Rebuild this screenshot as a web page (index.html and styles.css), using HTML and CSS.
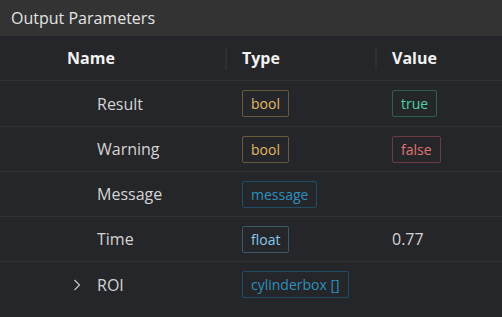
FILE: index.html
```html
<!DOCTYPE html>
<html>
<head>
<meta name="viewport" content="width=device-width, initial-scale=1">
<link rel="stylesheet" href="styles.css">
</head>
<body>

<div class="panel">
  <div class="panel-title">Output Parameters</div>

  <div class="params">
    <div class="row head">
      <div class="cell name">Name</div>
      <div class="cell type">Type</div>
      <div class="cell value">Value</div>
    </div>

    <div class="row first">
      <div class="cell name"><span class="leaf">Result</span></div>
      <div class="cell type"><span class="tag t-bool">bool</span></div>
      <div class="cell value"><span class="tag v-true">true</span></div>
    </div>

    <div class="row">
      <div class="cell name"><span class="leaf">Warning</span></div>
      <div class="cell type"><span class="tag t-bool">bool</span></div>
      <div class="cell value"><span class="tag v-false">false</span></div>
    </div>

    <div class="row">
      <div class="cell name"><span class="leaf">Message</span></div>
      <div class="cell type"><span class="tag t-msg">message</span></div>
      <div class="cell value"></div>
    </div>

    <div class="row">
      <div class="cell name"><span class="leaf">Time</span></div>
      <div class="cell type"><span class="tag t-float">float</span></div>
      <div class="cell value">0.77</div>
    </div>

    <div class="row">
      <div class="cell name">
        <svg class="chevron" width="8" height="12" viewBox="0 0 8 12"><path d="M1.5 1 L6.5 6 L1.5 11" fill="none" stroke="#c8c8c8" stroke-width="1.2"/></svg>
        <span class="leaf">ROI</span>
      </div>
      <div class="cell type"><span class="tag t-msg">cylinderbox []</span></div>
      <div class="cell value"></div>
    </div>
  </div>
</div>

</body>
</html>
```

FILE: styles.css
```css
body {
    margin: 0;
    background-color: #252629;
    font-family: "Open Sans", "Noto Sans", sans-serif;
    color: #d4d4d4;
}

.panel {
    width: 502px;
    height: 317px;
    overflow: hidden;
    background-color: #252629;
}

/* title bar */
.panel-title {
    height: 36px;
    line-height: 36px;
    padding-left: 11px;
    background-color: #333333;
    color: #e4e4e4;
    font-size: 16px;
}

.row {
    display: grid;
    grid-template-columns: 226px 150px 1fr;
    height: 45px;
    border-bottom: 1px solid #303135;
    box-sizing: border-box;
}

.row.first {
    height: 46px;
}

.row:last-child {
    border-bottom: none;
}

.cell {
    display: flex;
    align-items: center;
    padding-left: 16px;
    font-size: 16px;
}

.cell.name {
    padding-left: 97px;
}

/* header row */
.row.head {
    height: 45px;
}

.row.head .cell {
    font-weight: bold;
    color: #f2f2f2;
    position: relative;
}

.row.head .cell.name {
    padding-left: 67px;
}

.row.head .type::before,
.row.head .value::before {
    content: "";
    position: absolute;
    left: -1px;
    top: 12px;
    width: 2px;
    height: 22px;
    background-color: #2f3034;
}

.chevron {
    margin-left: -24px;
    margin-right: 16px;
}

.tag {
    display: inline-block;
    padding: 3px 8px 2px 8px;
    border: 1px solid;
    border-radius: 2px;
    font-size: 14px;
    line-height: 20px;
}

.t-bool {
    color: #e2b866;
    border-color: #6a5a3c;
}

.v-true {
    color: #4fd1a5;
    border-color: #2f5f52;
}

.v-false {
    color: #e07474;
    border-color: #6d3b3d;
}

.t-msg {
    color: #2d90bf;
    border-color: #1f4d66;
}

.t-float {
    color: #89c8ea;
    border-color: #3a5868;
}
```
